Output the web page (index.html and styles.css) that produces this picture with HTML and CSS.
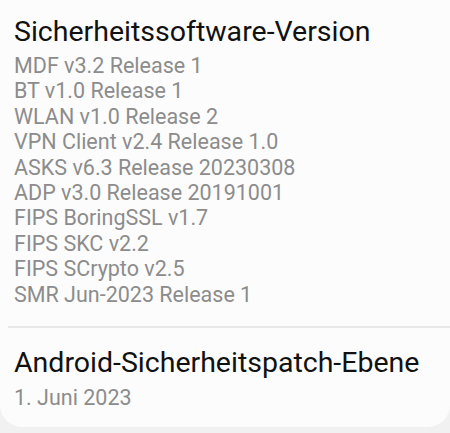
FILE: index.html
```html
<!DOCTYPE html>
<html lang="de">
<head>
  <meta charset="UTF-8" />
  <meta name="viewport" content="width=device-width, initial-scale=1.0" />
  <title>Softwareinformationen</title>
  <link rel="stylesheet" href="styles.css">
</head>
<body>
  <div class="card">
    <div class="item">
      <div class="item-title">Sicherheitssoftware-Version</div>
      <div class="item-summary">
        <div>MDF v3.2 Release 1</div>
        <div>BT v1.0 Release 1</div>
        <div>WLAN v1.0 Release 2</div>
        <div>VPN Client v2.4 Release 1.0</div>
        <div>ASKS v6.3 Release 20230308</div>
        <div>ADP v3.0 Release 20191001</div>
        <div>FIPS BoringSSL v1.7</div>
        <div>FIPS SKC v2.2</div>
        <div>FIPS SCrypto v2.5</div>
        <div>SMR Jun-2023 Release 1</div>
      </div>
    </div>

    <div class="divider"></div>

    <div class="item item-last">
      <div class="item-title">Android-Sicherheitspatch-Ebene</div>
      <div class="item-summary">
        <div>1. Juni 2023</div>
      </div>
    </div>
  </div>
</body>
</html>
```

FILE: styles.css
```css
body {
  margin: 0;
  background-color: #f1f1f1;
  font-family: Roboto, 'Noto Sans', sans-serif;
}

.card {
  background-color: #fcfcfc;
  border-radius: 0 0 22px 22px;
  padding-top: 14px;
  padding-bottom: 17px;
}

.item {
  padding: 0 14px 19px;
}

.item-last {
  padding-top: 17px;
  padding-bottom: 0;
}

.item-title {
  color: #111;
  font-size: 28.5px;
  line-height: 36px;
}

.item-summary {
  margin-top: 3px;
  color: #8c8c8c;
  font-size: 21.5px;
  line-height: 25.4px;
}

.item-last .item-summary {
  margin-top: 4px;
}

.divider {
  height: 2px;
  margin-left: 8px;
  background-color: #e8e8e8;
}
```
